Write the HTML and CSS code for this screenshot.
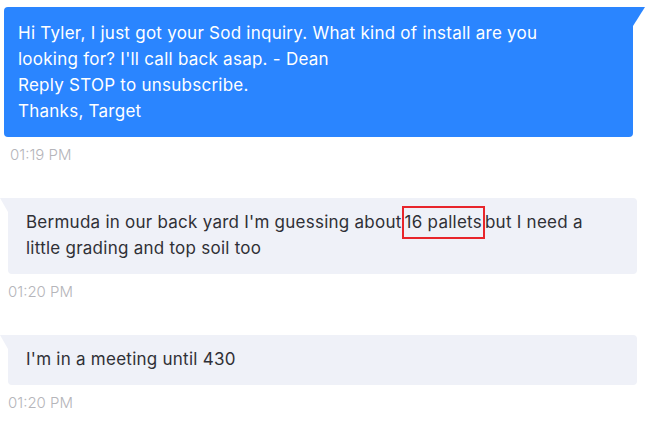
FILE: index.html
```html
<!DOCTYPE html>
<html>
<head>
<meta charset="utf-8">
<link rel="stylesheet" href="styles.css">
</head>
<body>
<div class="thread">
  <div class="msg out">
    <div class="bubble">Hi Tyler, I just got your Sod inquiry. What kind of install are you<br>looking for? I'll call back asap. - Dean<br>Reply STOP to unsubscribe.<br>Thanks, Target</div>
    <div class="time">01:19 PM</div>
  </div>
  <div class="msg in">
    <div class="bubble">Bermuda in our back yard I'm guessing about<span class="hl">16 pallets</span>but I need a little grading and top soil too</div>
    <div class="time">01:20 PM</div>
  </div>
  <div class="msg in">
    <div class="bubble">I'm in a meeting until 430</div>
    <div class="time">01:20 PM</div>
  </div>
</div>
</body>
</html>
```
FILE: styles.css
```css
html, body {
  margin: 0;
  padding: 0;
  background: #ffffff;
}
body {
  font-family: Inter, "Noto Sans", sans-serif;
}
.thread {
  display: flex;
  flex-direction: column;
  gap: 34px;
  padding-top: 7px;
}
.msg {
  display: flex;
  flex-direction: column;
  gap: 9px;
}
.bubble {
  position: relative;
  font-size: 17px;
  letter-spacing: 0.25px;
  line-height: 26px;
  border-radius: 4px;
}
.out .bubble {
  background: #2a85ff;
  color: #ffffff;
  margin-left: 4px;
  margin-right: 13px;
  padding: 13px 14px;
  border-top-right-radius: 0;
}
.out .bubble::after {
  content: "";
  position: absolute;
  top: 0;
  right: -12px;
  border-top: 19px solid #2a85ff;
  border-right: 12px solid transparent;
}
.in .bubble {
  background: #eff1f8;
  color: #2f3036;
  margin-left: 8px;
  margin-right: 9px;
  padding: 11px 28px 13px 18px;
  border-top-left-radius: 0;
}
.in .bubble::before {
  content: "";
  position: absolute;
  top: 0;
  left: -8px;
  border-top: 14px solid #eff1f8;
  border-left: 8px solid transparent;
}
.hl {
  border: 2px solid #e8252b;
  padding: 4px 1px 5px 1px;
}
.time {
  font-size: 15px;
  font-weight: 300;
  line-height: 18px;
  color: #b5b5ba;
}
.out .time {
  padding-left: 10px;
}
.in .time {
  padding-left: 8px;
}
```
